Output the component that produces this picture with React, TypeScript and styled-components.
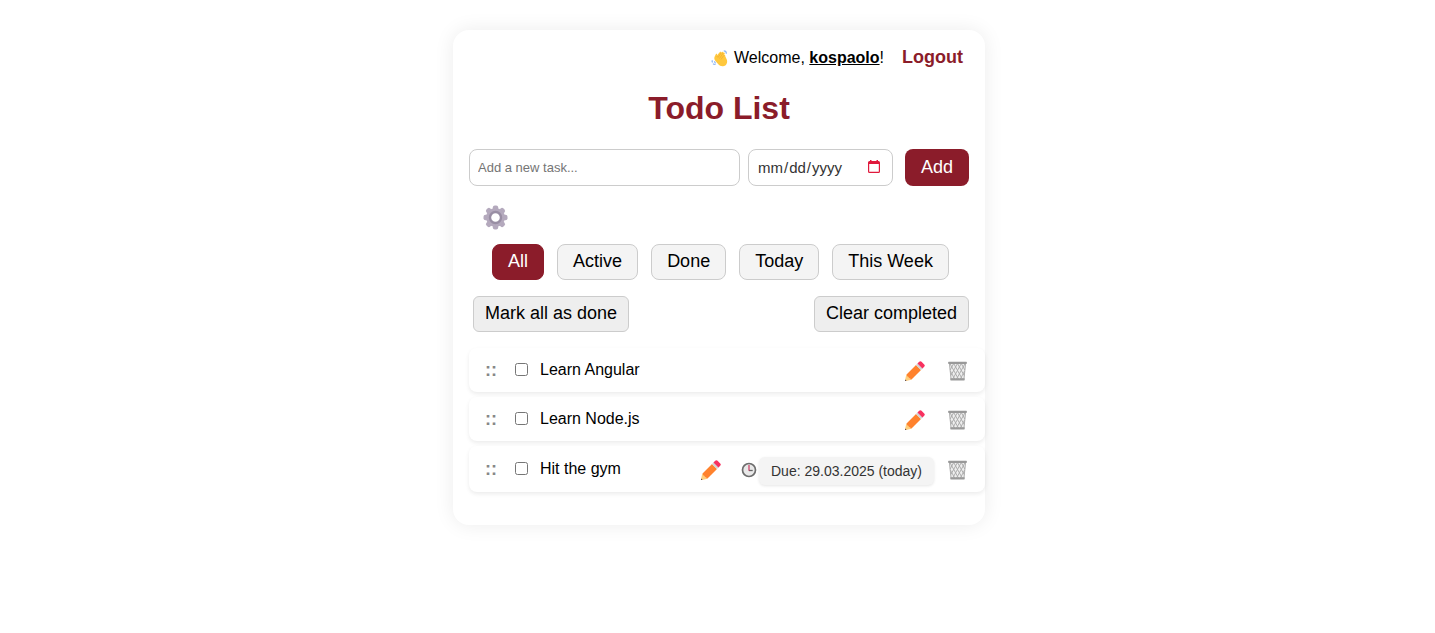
import React, { useState } from "react";
import styled, { createGlobalStyle } from "styled-components";

const GlobalStyle = createGlobalStyle`
  *, *::before, *::after { box-sizing: border-box; }
  body {
    margin: 0;
    background: #fff;
    color: #000;
    font: 16px/20px "Liberation Sans", Arial, sans-serif;
  }
  button, input { font-family: inherit; }
`;

const Page = styled.div`
  display: flex;
  justify-content: center;
  padding: 30px 0 30px 3px;
`;

const Card = styled.main`
  width: 100%;
  max-width: 532px;
  padding: 16px 16px 33px;
  border-radius: 16px;
  background: #fff;
  box-shadow: 0 0 20px rgba(0, 0, 0, 0.08);
`;

const UserBar = styled.header`
  display: flex;
  align-items: center;
  justify-content: flex-end;
  padding-right: 6px;
  height: 22px;
`;

const Welcome = styled.span`
  display: flex;
  align-items: center;
  margin-right: 18px;
  padding-top: 2px;
  white-space: pre;
  svg { margin-right: 6px; }
  a { color: #000; font-weight: bold; }
`;

const LogoutButton = styled.button`
  border: 0;
  padding: 0;
  background: none;
  color: #8b1c2a;
  font-size: 18px;
  font-weight: bold;
  line-height: 20px;
  cursor: pointer;
`;

const Title = styled.h1`
  margin: 22px 0 23px;
  color: #8b1c2a;
  font-size: 32px;
  line-height: 36px;
  text-align: center;
`;

const AddForm = styled.form`
  display: flex;
  height: 37px;
`;

const TaskInput = styled.input`
  flex: 1;
  min-width: 0;
  margin-right: 8px;
  padding: 0 8px;
  border: 1px solid #ccc;
  border-radius: 8px;
  font-size: 13px;
  &::placeholder { color: #757575; }
`;

const DateField = styled.div`
  position: relative;
  display: flex;
  width: 145px;
  margin-right: 12px;
  svg {
    position: absolute;
    top: 11px;
    right: 12px;
    pointer-events: none;
  }
`;

const DateInput = styled.input`
  width: 100%;
  padding: 0 8px;
  border: 1px solid #ccc;
  border-radius: 8px;
  background: #fff;
  color: #333;
  font-size: 15px;
  &::-webkit-calendar-picker-indicator { opacity: 0; cursor: pointer; }
`;

const AddButton = styled.button`
  width: 64px;
  padding: 0;
  border: 0;
  border-radius: 8px;
  background: #8b1c2a;
  color: #fff;
  font-size: 18px;
  cursor: pointer;
`;

const IconButton = styled.button`
  display: flex;
  flex: none;
  padding: 0;
  border: 0;
  background: none;
  cursor: pointer;
`;

const Settings = styled.div`
  display: flex;
  padding: 19px 0 14px 14px;
`;

const Filters = styled.nav`
  display: flex;
  justify-content: center;
  gap: 13px;
  padding-left: 3px;
`;

const FilterButton = styled.button<{ $active: boolean }>`
  height: 36px;
  padding: 0 15px 2px;
  border: 1px solid ${(p) => (p.$active ? "#8b1c2a" : "#ccc")};
  border-radius: 8px;
  background: ${(p) => (p.$active ? "#8b1c2a" : "#f4f4f4")};
  color: ${(p) => (p.$active ? "#fff" : "#000")};
  font-size: 18px;
  cursor: pointer;
`;

const BulkActions = styled.div`
  display: flex;
  justify-content: space-between;
  padding: 16px 0 16px 4px;
`;

const BulkButton = styled.button`
  height: 36px;
  padding: 0 11px 2px;
  border: 1px solid #ccc;
  border-radius: 6px;
  background: #eee;
  color: #000;
  font-size: 18px;
  cursor: pointer;
`;

const TaskList = styled.ul`
  display: flex;
  flex-direction: column;
  gap: 5px;
  margin: 0 -16px 0 0;
  padding: 0;
  list-style: none;
`;

const TaskRow = styled.li<{ $tall: boolean }>`
  display: flex;
  align-items: center;
  height: ${(p) => (p.$tall ? 46 : 44)}px;
  padding: 0 18px 0 16px;
  border-radius: 8px;
  background: #fff;
  box-shadow: 0 2px 4px rgba(0, 0, 0, 0.08);
`;

const DragHandle = styled.span`
  width: 30px;
  color: #888;
  font-size: 18px;
  font-weight: bold;
  cursor: grab;
`;

const TaskLabel = styled.label`
  display: flex;
  flex: 1;
  align-items: center;
  input { width: 13px; height: 13px; margin: 0 12px 2px 0; }
`;

const Due = styled.span`
  display: flex;
  align-items: center;
  margin: 0 14px 0 20px;
`;

const DueBadge = styled.span`
  margin: 1px 0 0 2px;
  padding: 4px 12px;
  border-radius: 6px;
  background: #f4f4f4;
  box-shadow: 0 1px 3px rgba(0, 0, 0, 0.1);
  color: #333;
  font-size: 14px;
`;

const Actions = styled.span<{ $gap: number }>`
  display: flex;
  align-items: center;
  padding-top: 2px;
  > button:first-child { margin-right: ${(p) => p.$gap}px; }
`;

const Wave = () => (
  <svg width="17" height="17" viewBox="0 0 18 18" aria-hidden="true">
    <path d="M3.8 7.2 5.1 4.5c.5-.8 1.5-.3 1.3.5L6 6.200l3.4-4.100c.8-.8 1.900 0 1.400.9l1-1c.8-.7 1.800.2 1.200 1.100l.5-.3c.9-.4 1.500.6.9 1.300l-.7 1.100c1-.5 1.600.3 1.300 1.100l1.800 4c.9 2.700-.2 5.900-3.100 6.700-2.300.6-4.700-.200-6-1.900L4.300 11c-.9-1.200-1-2.500-.5-3.800z" fill="#ffc83d" />
    <path d="m6 6.2 1.2 1.5M7.4 8l3.4-5M9 9l4-5.9M10.6 10l3.1-4.4" fill="none" stroke="#eba52c" strokeWidth=".6" />
    <path d="M13.5 1q2.800 0 2.800 3M1.500 10.800q-.8 1.300.4 2.300M4 12q-.5 1.200 1 1.700M2.200 14.400q1 1.400 2.800.5" fill="none" stroke="#8fb8f5" strokeWidth="1.300" />
  </svg>
);

const Gear = () => (
  <svg width="25" height="25" viewBox="-12.5 -12.5 25 25" aria-hidden="true">
    <g fill="#b4a9bd">
      {[0, 45, 90, 135].map((a) => (
        <rect key={a} x="-2.7" y="-12" width="5.4" height="24" rx="2" transform={`rotate(${a})`} />
      ))}
      <circle r="9.4" />
    </g>
    <circle r="5.5" fill="#fff" stroke="#998ea4" strokeWidth="2.4" />
  </svg>
);

const Calendar = () => (
  <svg width="14" height="14" viewBox="0 0 14 14" aria-hidden="true">
    <path d="M2.5 1H3V0h1.5v1h5V0H11v1h.5Q13 1 13 2.5v9q0 1.5-1.5 1.5h-9Q1 13 1 11.5v-9Q1 1 2.5 1zM2.2 4v7.8h9.6V4z" fill="#e0193c" fillRule="evenodd" />
  </svg>
);

const Pencil = () => (
  <svg width="20" height="20" viewBox="0 0 20 20" aria-hidden="true">
    <path d="M1.3 13.5 6.5 18.7.9 20Q0 20.2 0 19.2z" fill="#ffce7c" />
    <path d="m.2 18.5 1.3 1.3-.6.2Q0 20.2 0 19.2z" fill="#50404c" />
    <path d="M1.5 13.5 11 4l5 5-9.5 9.5q-1.200 0-1.500-1.200-1.300 0-1.500-1.300-1.500-.2-2-2.500z" fill="#ff822d" />
    <path d="m11 4 1.800-1.800 5 5L16 9z" fill="#d3d3d3" />
    <path d="m12.500 2.500 1.700-1.700q1.200-1.200 2.400 0l2.600 2.600q1.200 1.200 0 2.400l-1.700 1.700z" fill="#f8315f" />
  </svg>
);

const Trash = () => (
  <svg width="19" height="20" viewBox="0 0 20 20" preserveAspectRatio="none" aria-hidden="true">
    <path d="M1.200 2h17.600l-1.700 17H2.900z" fill="#eee" />
    <path
      d="M1.500 2.500 3.200 18M18.500 2.500 16.800 18M6 2.500 2.300 9M10 2.500 3 14.500M14 2.500 5 18M18 2.500 9 18M17.500 10 13 18M2 2.500 11 18M6 2.500 15 18M10 2.500 17 14.500M14 2.500 17.700 9M2.500 10 7 18"
      fill="none"
      stroke="#acacac"
      strokeWidth="1"
    />
    <rect x=".2" y=".7" width="19.600" height="2.200" rx=".6" fill="#999" />
    <rect x="2.400" y="17.200" width="15.200" height="2.200" rx=".6" fill="#999" />
  </svg>
);

const Clock = () => (
  <svg width="16" height="16" viewBox="0 0 16 16" aria-hidden="true">
    <circle cx="8" cy="8" r="6.5" fill="#e9e9e9" stroke="#6d6d6d" strokeWidth="1.7" />
    <path d="M8 8.500h3.700" stroke="#636363" strokeWidth="1.300" />
    <path d="M8 3v5.700" stroke="#ca2955" strokeWidth="1.100" />
  </svg>
);

const filters = ["All", "Active", "Done", "Today", "This Week"];
const tasks: { title: string; due?: string }[] = [
  { title: "Learn Angular" },
  { title: "Learn Node.js" },
  { title: "Hit the gym", due: "29.03.2025 (today)" },
];

export default function App() {
  const [filter, setFilter] = useState("All");
  return (
    <Page>
      <GlobalStyle />
      <Card>
        <UserBar>
          <Welcome>
            <Wave />Welcome, <a href="#profile">kospaolo</a>!
          </Welcome>
          <LogoutButton type="button">Logout</LogoutButton>
        </UserBar>
        <Title>Todo List</Title>
        <AddForm onSubmit={(e) => e.preventDefault()}>
          <TaskInput type="text" placeholder="Add a new task..." aria-label="New task" />
          <DateField>
            <DateInput type="date" aria-label="Due date" />
            <Calendar />
          </DateField>
          <AddButton type="submit">Add</AddButton>
        </AddForm>
        <Settings>
          <IconButton type="button" aria-label="Settings"><Gear /></IconButton>
        </Settings>
        <Filters>
          {filters.map((name) => (
            <FilterButton key={name} type="button" $active={name === filter} onClick={() => setFilter(name)}>
              {name}
            </FilterButton>
          ))}
        </Filters>
        <BulkActions>
          <BulkButton type="button">Mark all as done</BulkButton>
          <BulkButton type="button">Clear completed</BulkButton>
        </BulkActions>
        <TaskList>
          {tasks.map((task) => (
            <TaskRow key={task.title} $tall={!!task.due}>
              <DragHandle>::</DragHandle>
              <TaskLabel>
                <input type="checkbox" />
                {task.title}
              </TaskLabel>
              <Actions $gap={task.due ? 0 : 23}>
                <IconButton type="button" aria-label={`Edit ${task.title}`}><Pencil /></IconButton>
                {task.due && (
                  <Due>
                    <Clock />
                    <DueBadge>Due: {task.due}</DueBadge>
                  </Due>
                )}
                <IconButton type="button" aria-label={`Delete ${task.title}`}><Trash /></IconButton>
              </Actions>
            </TaskRow>
          ))}
        </TaskList>
      </Card>
    </Page>
  );
}
